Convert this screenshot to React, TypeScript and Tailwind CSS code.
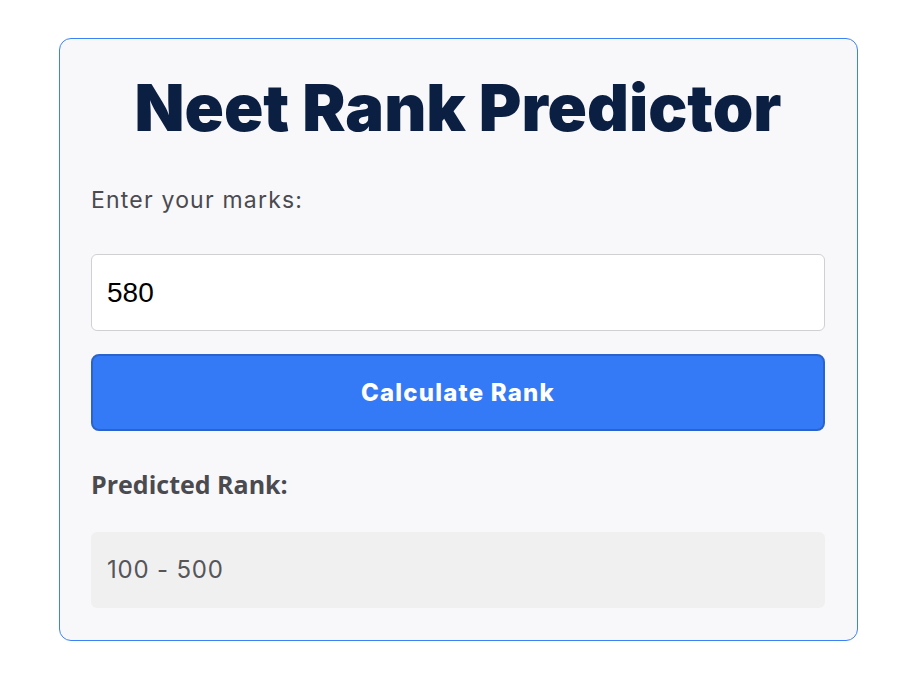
import React from "react";

export default function App() {
  const [marks, setMarks] = React.useState("580");
  const [rank] = React.useState("100 - 500");

  return (
    <div className="min-h-screen bg-white pt-[38px] pl-[59px]" style={{ fontFamily: "Inter, 'Noto Sans', sans-serif" }}>
      <div className="w-[799px] h-[603px] rounded-[12px] border border-[#3b82f6] bg-[#f8f8fa] pl-[31px] pr-[32px] pt-[36px]">
        <h1 className="text-center text-[65px] leading-[66px] font-black tracking-[0px] text-[#0b1f42]">
          Neet Rank Predictor
        </h1>
        <label className="block mt-[44px] text-[23px] leading-[30px] tracking-[1.2px] text-[#4a4a4f]">Enter your marks:</label>
        <input
          value={marks}
          onChange={(e) => setMarks(e.target.value)}
          className="mt-[39px] block w-full h-[77px] rounded-[6px] border border-[#d0d0d4] bg-white pl-[15px] text-[28px] text-black outline-none"
          style={{ fontFamily: "'Liberation Sans', Arial, sans-serif" }}
        />
        <button className="mt-[23px] block w-full h-[77px] rounded-[8px] border-2 border-[#2b63cc] bg-[#3479f6] text-[24px] font-extrabold text-white tracking-[1.2px]">
          Calculate Rank
        </button>
        <p className="mt-[38px] text-[25px] leading-[30px] font-bold text-[#4a4a4f]" style={{ fontFamily: "'Open Sans', sans-serif" }}>
          Predicted Rank:
        </p>
        <div className="mt-[33px] h-[76px] rounded-[6px] bg-[#f0f0f0] pl-4 flex items-center text-[24px] tracking-[0.8px] text-[#55555a]">
          {rank}
        </div>
      </div>
    </div>
  );
}
